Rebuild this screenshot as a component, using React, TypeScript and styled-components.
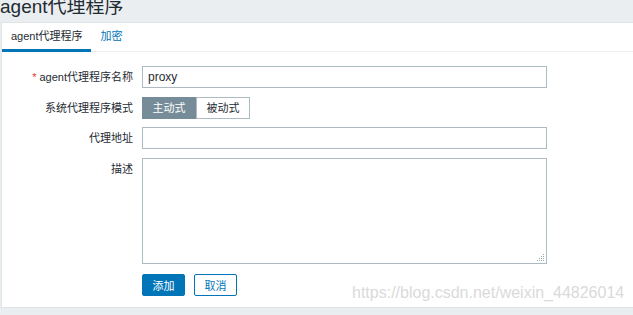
import styled, { createGlobalStyle } from 'styled-components';

const GlobalStyle = createGlobalStyle`
  html, body {
    margin: 0;
    padding: 0;
    background: #ebeef0;
    font-family: Arial, "Liberation Sans", "Noto Sans CJK SC", sans-serif;
    color: #1f2c33;
  }
`;

const _Page = styled.div`
  position: relative;
  width: 633px;
  height: 315px;
  overflow: hidden;
`;
const _Header = styled.div`
  height: 22px;
  overflow: hidden;
`;
const _Title = styled.h1`
  margin: -6px 0 0 0;
  font-size: 19px;
  line-height: 26px;
  font-weight: normal;
  color: #1f2c33;
`;
const _Panel = styled.div`
  margin-left: 1px;
  height: 286px;
  box-sizing: border-box;
  background: #ffffff;
  border: 1px solid #dfe4e7;
  border-right: none;
`;
const _Tabs = styled.ul`
  display: flex;
  margin: 0;
  padding: 0;
  height: 28px;
  border-bottom: 1px solid #ebeef0;
`;
const _Tab = styled.li<{ active?: boolean }>`
  list-style: none;
  padding: 0 8px 0 9px;
  margin-right: 1px;
  font-size: 11px;
  box-sizing: border-box;
  color: ${(props) => (props.active ? '#1f2c33' : '#0275b8')};
  border-bottom: 3px solid ${(props) => (props.active ? '#0275b8' : 'transparent')};
  height: 29px;
  line-height: 27px;
`;
const _Form = styled.div`
  display: grid;
  grid-template-columns: 131px 405px;
  column-gap: 9px;
  row-gap: 8.5px;
  padding-top: 14px;
`;
const _Label = styled.div`
  font-size: 11px;
  line-height: 22px;
  text-align: right;
  white-space: nowrap;
`;
const _Required = styled.span`
  color: #e33734;
  margin-right: 3px;
`;
const _Input = styled.input`
  box-sizing: border-box;
  width: 405px;
  height: 22px;
  margin: 0;
  padding: 0 5px;
  border: 1px solid #acbbc2;
  font-family: Arial, "Liberation Sans", sans-serif;
  font-size: 12px;
  color: #1f2c33;
  outline: none;
`;
const _Segments = styled.div`
  display: flex;
`;
const _Segment = styled.div<{ active?: boolean }>`
  box-sizing: border-box;
  height: 22px;
  padding: 0 9.5px;
  font-size: 11px;
  line-height: 20px;
  border: 1px solid ${(props) => (props.active ? '#768d99' : '#acbbc2')};
  background: ${(props) => (props.active ? '#768d99' : '#ffffff')};
  color: ${(props) => (props.active ? '#ffffff' : '#1f2c33')};
`;
const _AreaWrap = styled.div`
  position: relative;
  width: 405px;
  height: 106px;
`;
const _TextArea = styled.textarea`
  box-sizing: border-box;
  display: block;
  width: 405px;
  height: 106px;
  margin: 0;
  border: 1px solid #acbbc2;
  resize: none;
  outline: none;
`;
const _Grip = styled.svg`
  position: absolute;
  right: 2px;
  bottom: 2px;
`;
const _Buttons = styled.div`
  display: flex;
  gap: 9px;
  margin-top: 2px;
`;
const _Button = styled.button<{ primary?: boolean }>`
  box-sizing: border-box;
  height: 22px;
  padding: 0 9.5px;
  font-family: Arial, "Liberation Sans", "Noto Sans CJK SC", sans-serif;
  font-size: 11px;
  border-radius: 2px;
  border: 1px solid #0275b8;
  background: ${(props) => (props.primary ? '#0275b8' : '#ffffff')};
  color: ${(props) => (props.primary ? '#ffffff' : '#0275b8')};
`;
const _Watermark = styled.div`
  position: absolute;
  left: 352px;
  top: 284px;
  font-family: Arial, "Liberation Sans", sans-serif;
  font-size: 16px;
  color: #dadada;
  white-space: nowrap;
`;

const gripDots = [
  [7, 1],
  [5, 3],
  [7, 3],
  [3, 5],
  [5, 5],
  [7, 5],
  [1, 7],
  [3, 7],
  [5, 7],
  [7, 7],
];

const App = () => {
  return (
    <_Page>
      <GlobalStyle />
      <_Header>
        <_Title>agent代理程序</_Title>
      </_Header>
      <_Panel>
        <_Tabs>
          <_Tab active>agent代理程序</_Tab>
          <_Tab>加密</_Tab>
        </_Tabs>
        <_Form>
          <_Label>
            <_Required>*</_Required>agent代理程序名称
          </_Label>
          <_Input defaultValue="proxy" />
          <_Label>系统代理程序模式</_Label>
          <_Segments>
            <_Segment active>主动式</_Segment>
            <_Segment>被动式</_Segment>
          </_Segments>
          <_Label>代理地址</_Label>
          <_Input />
          <_Label>描述</_Label>
          <_AreaWrap>
            <_TextArea />
            <_Grip width="9" height="9" viewBox="0 0 9 9">
              {gripDots.map(([x, y], i) => (
                <rect key={`dot-${i}`} x={x} y={y} width="1" height="1" fill="#9aa8b0" />
              ))}
            </_Grip>
          </_AreaWrap>
          <div />
          <_Buttons>
            <_Button primary>添加</_Button>
            <_Button>取消</_Button>
          </_Buttons>
        </_Form>
      </_Panel>
      <_Watermark>https://blog.csdn.net/weixin_44826014</_Watermark>
    </_Page>
  );
};
export default App;
